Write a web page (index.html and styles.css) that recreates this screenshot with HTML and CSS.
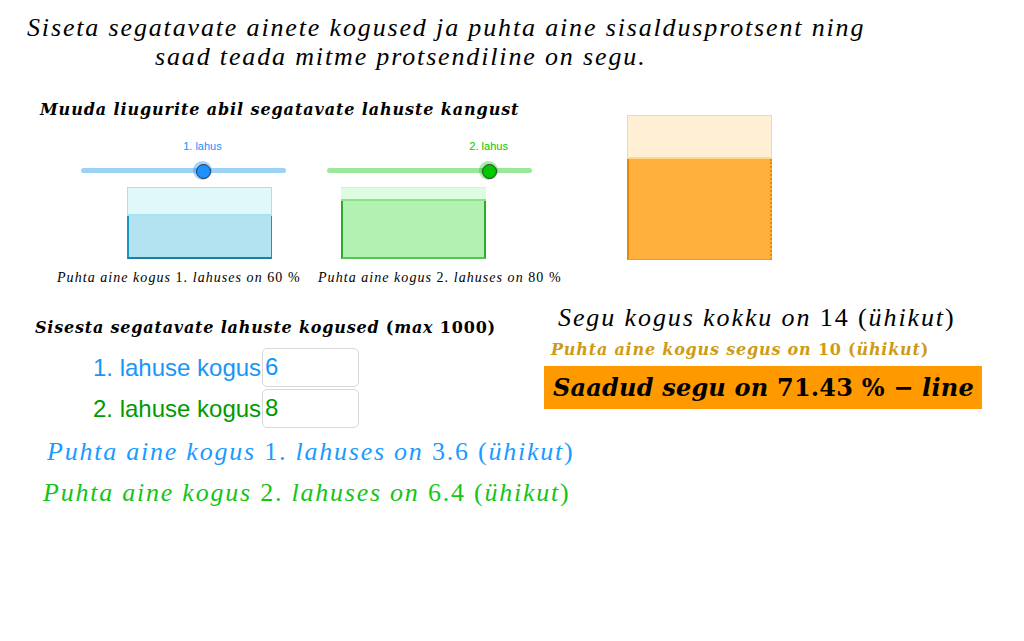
FILE: index.html
```html
<!DOCTYPE html>
<html lang="et">
<head>
<meta charset="utf-8">
<title>Segu protsent</title>
<link rel="stylesheet" href="styles.css">
</head>
<body>
<div class="applet">
  <header class="title">
    <p class="t1">Siseta segatavate ainete kogused ja puhta aine sisaldusprotsent ning</p>
    <p class="t2">saad teada mitme protsendiline on segu.</p>
  </header>

  <section class="top">
    <div class="left-top">
      <h2 class="hint">Muuda liugurite abil segatavate lahuste kangust</h2>
      <div class="pair">
        <div class="sol sol1">
          <div class="slider">
            <div class="track"></div>
            <div class="knob" style="left: 59%"><span class="slabel">1. lahus</span></div>
          </div>
          <div class="beaker">
            <div class="empty" style="height: 40%"></div>
            <div class="fill"></div>
          </div>
          <p class="cap">Puhta aine kogus <span class="n">1.</span> lahuses on <span class="n">60 %</span></p>
        </div>
        <div class="sol sol2">
          <div class="slider">
            <div class="track"></div>
            <div class="knob" style="left: 78.6%"><span class="slabel">2. lahus</span></div>
          </div>
          <div class="beaker">
            <div class="empty" style="height: 20%"></div>
            <div class="fill"></div>
          </div>
          <p class="cap">Puhta aine kogus <span class="n">2.</span> lahuses on <span class="n">80 %</span></p>
        </div>
      </div>
    </div>
    <div class="beaker mix">
      <div class="empty" style="height: 30%"></div>
      <div class="fill"></div>
    </div>
  </section>

  <section class="bottom">
    <div class="left-bottom">
      <h2 class="hint hint2">Sisesta segatavate lahuste kogused <span class="n">(</span>max <span class="n">1000)</span></h2>
      <div class="rows">
        <label class="row row1"><span class="lbl">1. lahuse kogus</span><span class="inp">6</span></label>
        <label class="row row2"><span class="lbl">2. lahuse kogus</span><span class="inp">8</span></label>
      </div>
      <p class="res res1">Puhta aine kogus <span class="n">1.</span> lahuses on <span class="n">3.6 (</span>ühikut<span class="n">)</span></p>
      <p class="res res2">Puhta aine kogus <span class="n">2.</span> lahuses on <span class="n">6.4 (</span>ühikut<span class="n">)</span></p>
    </div>
    <div class="right-bottom">
      <p class="total">Segu kogus kokku on <span class="n">14 (</span>ühikut<span class="n">)</span></p>
      <p class="pure">Puhta aine kogus segus on <span class="n">10 (</span>ühikut<span class="n">)</span></p>
      <p class="answer">Saadud segu on <span class="n">71.43 % −</span> line</p>
    </div>
  </section>
</div>
</body>
</html>
```

FILE: styles.css
```css
* { box-sizing: border-box; }
html, body { margin: 0; padding: 0; background: #fff; }
.applet {
  width: 1024px;
  height: 641px;
  overflow: hidden;
  font-family: "Liberation Serif", "DejaVu Serif", serif;
  font-style: italic;
  color: #000;
}
p, h2 { margin: 0; font-weight: normal; }
.n { font-style: normal; }

.title { padding-top: 13px; font-size: 26px; line-height: 29px; letter-spacing: 1.85px; }
.t1 { padding-left: 27px; }
.t2 { padding-left: 155px; }

.top { display: flex; align-items: flex-start; margin-top: 29px; }
.left-top { width: 627px; }
.hint {
  font-family: "DejaVu Serif", "Liberation Serif", serif;
  font-weight: bold;
  font-size: 16px;
  line-height: 20px;
  letter-spacing: 0.9px;
  padding-left: 40px;
}
.pair { display: flex; margin-top: 20px; }
.sol { display: flex; flex-direction: column; align-items: flex-start; }
.sol1 { width: 261px; margin-left: 57px; }
.sol1 .slider { margin-left: 24px; }
.sol1 .beaker { margin-left: 70px; }
.sol2 .slider { margin-left: 9px; }
.sol2 .beaker { margin-left: 23px; }

.slider { position: relative; width: 205px; height: 47px; }
.track {
  position: absolute;
  left: 0; right: 0; top: 28px;
  height: 5px;
  border-radius: 3px;
}
.sol1 .track { background: #9bd3f7; }
.sol2 .track { background: #9be89b; }
.knob {
  position: absolute;
  top: 21px;
  width: 19px; height: 19px;
  margin-left: -9px;
  border-radius: 50%;
}
.knob::after {
  content: "";
  position: absolute;
  left: 3px; top: 3px;
  width: 13px; height: 13px;
  border-radius: 50%;
  border: 1px solid #333;
}
.sol1 .knob { background: rgba(30, 144, 255, 0.4); }
.sol1 .knob::after { background: #1e90ff; }
.sol2 .knob { background: rgba(0, 200, 0, 0.35); }
.sol2 .knob::after { background: #00c800; }
.slabel {
  position: absolute;
  bottom: 28px;
  left: 50%;
  transform: translateX(-50%);
  font-family: "Liberation Sans", Arial, sans-serif;
  font-style: normal;
  font-size: 11px;
  white-space: nowrap;
}
.sol1 .slabel { color: #1e90ff; }
.sol2 .slabel { color: #00c800; }

.beaker {
  display: flex;
  flex-direction: column;
  width: 145px;
  height: 72px;
}
.beaker .fill { flex: 1; }
.sol1 .empty { background: #e0f8f9; border: 1px solid #a9e2ec; border-bottom: 2px solid #a9e2ec; }
.sol1 .fill { background: #b3e3f1; border-left: 2px solid #1b95c6; border-right: 1px solid #1b95c6; border-bottom: 2px solid #1a7ea5; }
.sol2 .empty { background: #defde0; border-top: 1px dotted #bfeec0; border-bottom: 2px solid #8be28b; }
.sol2 .fill { background: #b3f1b3; border-left: 2px solid #2fa82f; border-right: 2px solid #2fa82f; border-bottom: 2px solid #52c852; }

.cap {
  font-size: 14px;
  line-height: 16px;
  margin-top: 11px;
  letter-spacing: 1.05px;
  white-space: nowrap;
}

.mix { width: 145px; height: 145px; margin-top: 15px; }
.mix .empty { background: #ffefd4; border: 1px solid #ffd88a; border-bottom: 2px solid #ffd88a; }
.mix .fill { background: #ffb03c; border-left: 2px solid #e08c0a; border-right: 2px dotted #e08c0a; border-bottom: 1px solid #f0a020; }

.bottom { display: grid; grid-template-columns: 544px 1fr; margin-top: 14px; }
.left-bottom, .right-bottom { white-space: nowrap; }
.hint2 { padding-left: 35px; margin-top: 18px; letter-spacing: 0.8px; }
.rows { display: flex; flex-direction: column; gap: 2px; margin-top: 10px; padding-left: 93px; }
.row { display: flex; align-items: center; gap: 2px; }
.lbl {
  font-family: "Liberation Sans", Arial, sans-serif;
  font-style: normal;
  font-size: 24px;
  width: 167px;
}
.inp {
  width: 97px;
  height: 39px;
  border: 1px solid #d8d8d8;
  border-radius: 5px;
  padding: 2px 0 0 2px;
  font-family: "Liberation Sans", Arial, sans-serif;
  font-style: normal;
  font-size: 24px;
  line-height: 32px;
}
.row1 { color: #1796f5; }
.row2 { color: #009a00; }

.res { font-size: 26px; line-height: 41px; letter-spacing: 1.77px; }
.res1 { color: #1a9bff; padding-left: 47px; margin-top: 3px; }
.res2 { color: #16c416; padding-left: 43px; }

.total { font-size: 26px; line-height: 30px; letter-spacing: 1.9px; padding-left: 14px; margin-top: 3px; }
.pure {
  font-family: "DejaVu Serif", "Liberation Serif", serif;
  color: #cf9b15;
  font-weight: bold;
  font-size: 16px;
  line-height: 20px;
  letter-spacing: 0.8px;
  padding-left: 7px;
  margin-top: 7px;
}
.answer {
  font-family: "DejaVu Serif", "Liberation Serif", serif;
  margin-top: 6px;
  width: 438px;
  height: 43px;
  background: #ff9900;
  font-weight: bold;
  font-size: 24px;
  line-height: 43px;
  letter-spacing: 0.2px;
  padding-left: 9px;
}
```
